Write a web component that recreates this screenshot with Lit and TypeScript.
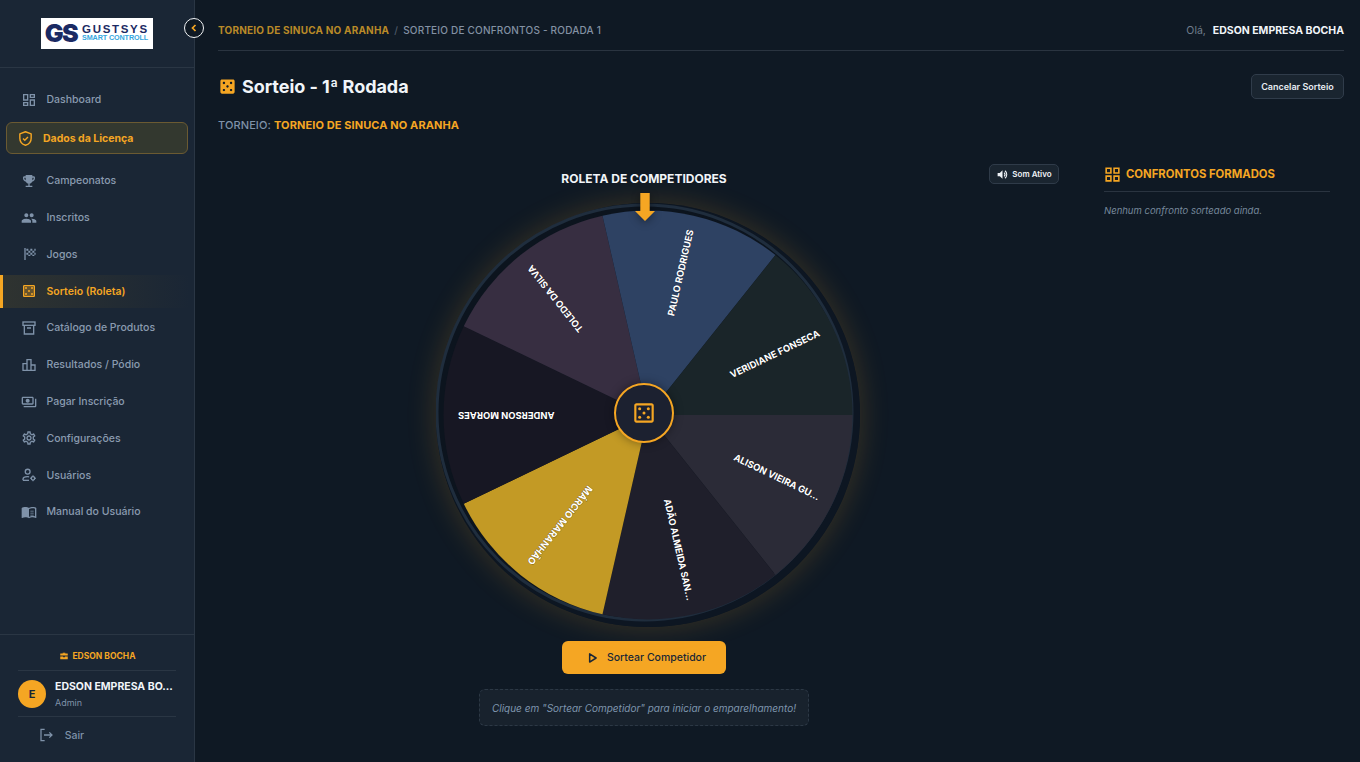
import { LitElement, html, css, svg } from "lit";
import { customElement } from "lit/decorators.js";

const P: Record<string, string> = {
  dashboard: "M19 5v2h-4V5h4M9 5v6H5V5h4m10 8v6h-4v-6h4M9 17v2H5v-2h4M21 3h-8v6h8V3zM11 3H3v10h8V3zm10 8h-8v10h8V11zM11 15H3v6h8v-6z",
  trophy: "M19 5h-2V3H7v2H5c-1.1 0-2 .9-2 2v1c0 2.55 1.92 4.63 4.39 4.94.63 1.5 1.98 2.63 3.61 2.96V19H7v2h10v-2h-4v-3.1c1.63-.33 2.98-1.46 3.61-2.96C19.08 12.63 21 10.55 21 8V7c0-1.1-.9-2-2-2zM5 8V7h2v3.82C5.84 10.4 5 9.3 5 8zm14 0c0 1.3-.84 2.4-2 2.82V7h2v1z",
  group: "M16 11c1.66 0 2.99-1.34 2.99-3S17.66 5 16 5c-1.66 0-3 1.34-3 3s1.34 3 3 3zm-8 0c1.66 0 2.99-1.34 2.99-3S9.66 5 8 5C6.34 5 5 6.34 5 8s1.34 3 3 3zm0 2c-2.33 0-7 1.17-7 3.5V19h14v-2.5c0-2.33-4.67-3.5-7-3.5zm8 0c-.29 0-.62.02-.97.05 1.16.84 1.97 1.97 1.97 3.45V19h6v-2.5c0-2.33-4.67-3.5-7-3.5z",
  flag: "M5 3h2v18H5zM8 4h3v3H8zM14 4h3v3h-3zM20 4h2v3h-2zM11 7h3v3h-3zM17 7h3v3h-3zM8 10h3v3H8zM14 10h3v3h-3zM20 10h2v3h-2zM11 13h3v2h-3zM17 13h3v2h-3z",
  diceBox: "M19 5v14H5V5h14m0-2H5c-1.1 0-2 .9-2 2v14c0 1.1.9 2 2 2h14c1.1 0 2-.9 2-2V5c0-1.1-.9-2-2-2z",
  diceFull: "M19 3H5c-1.1 0-2 .9-2 2v14c0 1.1.9 2 2 2h14c1.1 0 2-.9 2-2V5c0-1.1-.9-2-2-2zM7.5 18c-.83 0-1.5-.67-1.5-1.5S6.67 15 7.5 15s1.5.67 1.5 1.5S8.33 18 7.5 18zm0-9C6.67 9 6 8.33 6 7.5S6.67 6 7.5 6 9 6.67 9 7.5 8.33 9 7.5 9zm4.5 4.5c-.83 0-1.5-.67-1.5-1.5s.67-1.5 1.5-1.5 1.5.67 1.5 1.5-.67 1.5-1.5 1.5zm4.5 4.5c-.83 0-1.5-.67-1.5-1.5s.67-1.5 1.5-1.5 1.5.67 1.5 1.5-.67 1.5-1.5 1.5zm0-9c-.83 0-1.5-.67-1.5-1.5S15.67 6 16.5 6s1.5.67 1.5 1.5S17.33 9 16.5 9z",
  chart: "M16 11V3H8v6H2v12h20V11h-6zm-6-6h4v14h-4V5zm-6 6h4v8H4v-8zm16 8h-4v-6h4v6z",
  pay: "M19 14V6c0-1.1-.9-2-2-2H3c-1.1 0-2 .9-2 2v8c0 1.1.9 2 2 2h14c1.1 0 2-.9 2-2zm-2 0H3V6h14v8zm-7-7c-1.66 0-3 1.34-3 3s1.34 3 3 3 3-1.34 3-3-1.34-3-3-3zm13 0v11c0 1.1-.9 2-2 2H4v-2h17V7h2z",
  gear: "M19.43 12.98c.04-.32.07-.64.07-.98 0-.34-.03-.66-.07-.98l2.11-1.65c.19-.15.24-.42.12-.64l-2-3.46c-.09-.16-.26-.25-.44-.25-.06 0-.12.01-.17.03l-2.49 1c-.52-.4-1.08-.73-1.69-.98l-.38-2.65C14.46 2.18 14.25 2 14 2h-4c-.25 0-.46.18-.49.42l-.38 2.65c-.61.25-1.17.59-1.69.98l-2.49-1c-.06-.02-.12-.03-.18-.03-.17 0-.34.09-.43.25l-2 3.46c-.13.22-.07.49.12.64l2.11 1.65c-.04.32-.07.65-.07.98 0 .33.03.66.07.98l-2.11 1.65c-.19.15-.24.42-.12.64l2 3.46c.09.16.26.25.44.25.06 0 .12-.01.17-.03l2.49-1c.52.4 1.08.73 1.69.98l.38 2.65c.03.24.24.42.49.42h4c.25 0 .46-.18.49-.42l.38-2.65c.61-.25 1.17-.59 1.69-.98l2.49 1c.06.02.12.03.18.03.17 0 .34-.09.43-.25l2-3.46c.12-.22.07-.49-.12-.64l-2.11-1.65zm-1.98-1.71c.04.31.05.52.05.73 0 .21-.02.43-.05.73l-.14 1.13.89.7 1.08.84-.7 1.21-1.27-.51-1.04-.42-.9.68c-.43.32-.84.56-1.25.73l-1.06.43-.16 1.13-.2 1.35h-1.4l-.19-1.35-.16-1.13-1.06-.43c-.43-.18-.83-.41-1.23-.71l-.91-.7-1.06.43-1.27.51-.7-1.21 1.08-.84.89-.7-.14-1.13c-.03-.31-.05-.54-.05-.74s.02-.43.05-.73l.14-1.13-.89-.7-1.08-.84.7-1.21 1.27.51 1.04.42.9-.68c.43-.32.84-.56 1.25-.73l1.06-.43.16-1.13.2-1.35h1.39l.19 1.35.16 1.13 1.06.43c.43.18.83.41 1.23.71l.91.7 1.06-.43 1.27-.51.7 1.21-1.07.85-.89.7.14 1.13zM12 8c-2.21 0-4 1.79-4 4s1.79 4 4 4 4-1.79 4-4-1.79-4-4-4zm0 6c-1.1 0-2-.9-2-2s.9-2 2-2 2 .9 2 2-.9 2-2 2z",
  book: "M21 5c-1.11-.35-2.33-.5-3.5-.5-1.95 0-4.05.4-5.5 1.5-1.45-1.1-3.55-1.5-5.5-1.5S2.45 4.9 1 6v14.65c0 .25.25.5.5.5.1 0 .15-.05.25-.05C3.1 20.45 5.05 20 6.5 20c1.95 0 4.05.4 5.5 1.5 1.35-.85 3.8-1.5 5.5-1.5 1.65 0 3.35.3 4.75 1.05.1.05.15.05.25.05.25 0 .5-.25.5-.5V6c-.6-.45-1.25-.75-2-1zm0 13.5c-1.1-.35-2.3-.5-3.5-.5-1.7 0-4.15.65-5.5 1.5V8c1.35-.85 3.8-1.5 5.5-1.5 1.2 0 2.4.15 3.5.5v11.5zM14 10h5v1.4h-5zM14 13h5v1.4h-5zM14 16h5v1.4h-5z",
  grid: "M3 3v8h8V3H3zm6 6H5V5h4v4zm-6 4v8h8v-8H3zm6 6H5v-4h4v4zm4-16v8h8V3h-8zm6 6h-4V5h4v4zm-6 4v8h8v-8h-8zm6 6h-4v-4h4v4z",
  brief: "M9 6V4h6v2h5c.6 0 1 .4 1 1v4H3V7c0-.6.4-1 1-1zm2 0h2V5.5h-2zM3 13h7v2h4v-2h7v6c0 .6-.4 1-1 1H4c-.6 0-1-.4-1-1z",
};

const icons: Record<string, unknown> = {
  shield: svg`<path d="M12 2.5 20 5.5v6c0 5-3.4 8.6-8 10-4.6-1.4-8-5-8-10v-6z" fill="none" stroke="currentColor" stroke-width="2" stroke-linejoin="round"/><path d="m8.5 12 2.5 2.5 4.5-4.5" fill="none" stroke="currentColor" stroke-width="2"/>`,
  box: svg`<g fill="none" stroke="currentColor" stroke-width="2"><rect x="3" y="3" width="18" height="5"/><path d="M5 8v13h14V8M9 12h6"/></g>`,
  casino: svg`<path d=${P.diceBox} fill="currentColor"/><rect x="5" y="5" width="14" height="14" fill="currentColor" opacity=".3"/><g fill="currentColor"><circle cx="7.5" cy="7.5" r="1.5"/><circle cx="16.5" cy="7.5" r="1.5"/><circle cx="12" cy="12" r="1.5"/><circle cx="7.5" cy="16.5" r="1.5"/><circle cx="16.5" cy="16.5" r="1.5"/></g>`,
  users: svg`<g fill="none" stroke="currentColor" stroke-width="2"><circle cx="10" cy="7" r="3.6"/><path d="M3 20v-1.5c0-2.6 3.2-4 7-4 .8 0 1.5.1 2.2.2"/><path d="M3 20h9"/><circle cx="18" cy="17" r="2.6"/></g><g stroke="currentColor" stroke-width="1.6"><path d="M18 12.5v2M18 19.5v2M13.5 17h2M20.5 17h2"/></g>`,
  logout: svg`<g fill="none" stroke="currentColor" stroke-width="1.9"><path d="M10 3.5H4.5v17H10M9 12h12M17 8l4 4-4 4"/></g>`,
  sound: svg`<path d="M3 9v6h4l5 5V4L7 9z" fill="currentColor"/><path d="M15 8.5a5 5 0 0 1 0 7M16.5 5a9 9 0 0 1 0 14" fill="none" stroke="currentColor" stroke-width="2"/>`,
  play: svg`<path d="M8 5v14l11-7z" fill="none" stroke="currentColor" stroke-width="2.6" stroke-linejoin="round"/>`,
  chevron: svg`<path d="M15 6l-6 6 6 6" fill="none" stroke="currentColor" stroke-width="3.4"/>`,
  dieHub: svg`<path d=${P.diceBox} fill="currentColor"/><g fill="currentColor"><circle cx="8" cy="8" r="1.4"/><circle cx="16" cy="8" r="1.4"/><circle cx="12" cy="12" r="1.4"/><circle cx="8" cy="16" r="1.4"/><circle cx="16" cy="16" r="1.4"/></g>`,
};

function icon(name: string, cls = "") {
  const body = icons[name] ?? svg`<path d=${P[name]} fill="currentColor"/>`;
  return html`<svg class="ic ${cls}" viewBox="0 0 24 24" aria-hidden="true">${body}</svg>`;
}

const NAV = [
  { i: "dashboard", t: "Dashboard" },
  { i: "shield", t: "Dados da Licença", kind: "license" },
  { i: "trophy", t: "Campeonatos" },
  { i: "group", t: "Inscritos" },
  { i: "flag", t: "Jogos" },
  { i: "casino", t: "Sorteio (Roleta)", kind: "active" },
  { i: "box", t: "Catálogo de Produtos" },
  { i: "chart", t: "Resultados / Pódio" },
  { i: "pay", t: "Pagar Inscrição" },
  { i: "gear", t: "Configurações" },
  { i: "users", t: "Usuários" },
  { i: "book", t: "Manual do Usuário" },
];

const SEGMENTS = [
  { n: "ALISON VIEIRA GU...", c: "#2b2b37" },
  { n: "ADÃO ALMEIDA SAN...", c: "#1f1f2b" },
  { n: "MÁRCIO MARANHÃO", c: "#c39a25" },
  { n: "ANDERSON MORAES", c: "#171723" },
  { n: "TOLEDO DA SILVA", c: "#372e41" },
  { n: "PAULO RODRIGUES", c: "#2e4263" },
  { n: "VERIDIANE FONSECA", c: "#1a2529" },
];

function wheel() {
  const r = 204.5;
  const step = (Math.PI * 2) / SEGMENTS.length;
  return svg`
    <circle cx="212" cy="212" r="212" fill="#0d1622"/>
    <circle cx="208.5" cy="209.5" r="207.5" fill="#0c141e" stroke="#1f2d3d" stroke-width="3"/>
    ${SEGMENTS.map((s, k) => {
      const a = k * step;
      const b = a + step;
      const d = `M212 212L${212 + r * Math.cos(a)} ${212 + r * Math.sin(a)}A${r} ${r} 0 0 1 ${212 + r * Math.cos(b)} ${212 + r * Math.sin(b)}Z`;
      const deg = ((k + 0.5) * 360) / SEGMENTS.length;
      return svg`<path d=${d} fill=${s.c}/>
        <text class="seg" transform="translate(212 212) rotate(${deg})" x="190" y="3.4" text-anchor="end">${s.n}</text>`;
    })}
  `;
}

@customElement("app-root")
export class AppRoot extends LitElement {
  static styles = css`
    :host {
      display: flex;
      width: 1360px;
      height: 762px;
      overflow: hidden;
      background: #0f1924;
      font-family: Inter, "Noto Sans", sans-serif;
      color: #f1f5f9;
      position: relative;
    }
    .ic { width: 16px; height: 16px; flex: none; display: block; }
    .side {
      width: 195px;
      flex: none;
      box-sizing: border-box;
      background: #1a2635;
      border-right: 1px solid #2a3644;
      display: flex;
      flex-direction: column;
    }
    .brand {
      height: 68px;
      box-sizing: border-box;
      border-bottom: 1px solid #2a3644;
      padding: 18px 0 0 41px;
      flex: none;
    }
    .logo {
      width: 112px;
      height: 31px;
      background: #fff;
      display: flex;
      align-items: center;
      gap: 3px;
      box-sizing: border-box;
      padding: 0 2px;
    }
    .gs {
      font: 900 25px/1 Inter, sans-serif;
      letter-spacing: -1.5px;
      color: #1b2a63;
      width: 36px;
      flex: none;
      text-align: center;
    }
    .lt { display: flex; flex-direction: column; font-family: "Liberation Sans", sans-serif; }
    .lt b { font-size: 11.5px; line-height: 9px; font-weight: 900; color: #1b2a63; letter-spacing: 1.7px; }
    .lt i { font-size: 7.2px; line-height: 8px; font-weight: 700; font-style: normal; color: #35a7e0; letter-spacing: -.1px; }
    .collapse {
      position: absolute;
      left: 184px;
      top: 18px;
      width: 20px;
      height: 20px;
      box-sizing: border-box;
      border: 1px solid #f2f4f6;
      border-radius: 50%;
      background: #0f1924;
      color: #f5a623;
      display: flex;
      align-items: center;
      justify-content: center;
    }
    .collapse .ic { width: 12px; height: 12px; }
    nav { padding-top: 15.6px; flex: 1; display: flex; flex-direction: column; }
    .item {
      height: 32.8px;
      margin-bottom: 4px;
      display: flex;
      align-items: center;
      gap: 10px;
      padding-left: 20.5px;
      font-size: 10.5px;
      font-weight: 500;
      color: #8a9bb0;
      box-sizing: border-box;
    }
    .item .ic { color: #7f92a9; }
    .item.license {
      margin: 2px 6px 10px;
      width: 182px;
      height: 32px;
      padding-left: 10px;
      gap: 9px;
      border: 1px solid #6b5a32;
      border-radius: 6px;
      background: #33382f;
      color: #f5a623;
      font-weight: 700;
    }
    .item.license .ic { color: #f5a623; width: 17px; height: 17px; }
    .item.active {
      border-left: 3px solid #f5a623;
      padding-left: 17.5px;
      width: 190px;
      background: linear-gradient(90deg, #2f3330, #1a2635);
      color: #f5a623;
      font-weight: 600;
    }
    .item.active .ic { color: #f5a623; }
    .foot {
      border-top: 1px solid #2a3644;
      height: 128px;
      box-sizing: border-box;
      padding: 0 18px;
      flex: none;
      display: flex;
      flex-direction: column;
    }
    .org {
      height: 36px;
      box-sizing: border-box;
      padding: 7px 0 0 1px;
      border-bottom: 1px solid #2a3644;
      display: flex;
      align-items: center;
      justify-content: center;
      gap: 3px;
      color: #f5a623;
      font-size: 8.5px;
      font-weight: 700;
      flex: none;
    }
    .org .ic { width: 10px; height: 10px; }
    .user {
      height: 46px;
      box-sizing: border-box;
      border-bottom: 1px solid #2a3644;
      display: flex;
      align-items: center;
      gap: 9px;
      flex: none;
    }
    .avatar {
      width: 28px;
      height: 28px;
      border-radius: 50%;
      background: #f5a623;
      color: #1a2635;
      font-size: 11px;
      font-weight: 700;
      display: flex;
      align-items: center;
      justify-content: center;
      flex: none;
    }
    .uname { font-size: 10.5px; font-weight: 700; color: #f1f5f9; line-height: 13px; white-space: nowrap; }
    .urole { font-size: 9px; color: #7f92a9; line-height: 11px; margin-top: 4px; }
    .logout {
      display: flex;
      align-items: center;
      gap: 11px;
      padding: 10px 0 0 19.7px;
      font-size: 10.5px;
      font-weight: 500;
      color: #7f92a9;
    }
    .main {
      flex: 1;
      min-width: 0;
      padding: 0 16px 0 23px;
      display: flex;
      flex-direction: column;
    }
    .top {
      height: 51px;
      flex: none;
      box-sizing: border-box;
      border-bottom: 1px solid #2a3440;
      padding-top: 10px;
      display: flex;
      align-items: center;
      justify-content: space-between;
      font-size: 10px;
    }
    .crumb { display: flex; gap: 5px; font-weight: 500; color: #8391a3; letter-spacing: .2px; }
    .crumb b { color: #b98a28; font-weight: 700; letter-spacing: .2px; }
    .crumb span { color: #4d5a69; }
    .hello { color: #707d8c; font-size: 10.5px; }
    .hello b { color: #f1f5f9; font-weight: 700; margin-left: 4px; }
    .head {
      display: flex;
      justify-content: space-between;
      align-items: center;
      height: 25px;
      margin-top: 23px;
      flex: none;
    }
    h1 { margin: 0; display: flex; align-items: center; gap: 5px; font-size: 18px; font-weight: 700; color: #f1f5f9; line-height: 25px; letter-spacing: -.05px; }
    h1 .ic { width: 19px; height: 19px; color: #f5a623; }
    .cancel {
      width: 93px;
      height: 25px;
      box-sizing: border-box;
      border: 1px solid #303c4a;
      border-radius: 5px;
      background: #1a2530;
      color: #e6ebf1;
      font-size: 9px;
      font-weight: 600;
      display: flex;
      align-items: center;
      justify-content: center;
    }
    .tourn { margin-top: 20px; font-size: 11px; line-height: 13px; font-weight: 500; color: #7f92a9; flex: none; letter-spacing: .1px; }
    .tourn b { color: #f5a623; font-weight: 700; }
    .body { display: flex; flex: 1; min-height: 0; margin-top: 32px; }
    .stage {
      width: 852px;
      flex: none;
      display: flex;
      flex-direction: column;
      align-items: center;
      position: relative;
    }
    .sound {
      position: absolute;
      right: 11px;
      top: 0;
      width: 70px;
      height: 20px;
      box-sizing: border-box;
      border: 1px solid #2f3b49;
      border-radius: 5px;
      background: #1a2530;
      font-size: 8px;
      font-weight: 600;
      color: #eef2f6;
      display: flex;
      align-items: center;
      justify-content: center;
      gap: 3px;
    }
    .sound .ic { width: 13px; height: 13px; }
    .st-title {
      font-size: 12px;
      font-weight: 700;
      color: #f1f5f9;
      line-height: 15px;
      margin-top: 7px;
    }
    .wheel {
      width: 424px;
      height: 424px;
      margin: 17px 0 0 7px;
      position: relative;
      flex: none;
      border-radius: 50%;
      box-shadow: 0 0 30px rgba(245, 166, 35, .2);
    }
    .disc { display: block; width: 424px; height: 424px; }
    .seg {
      font: 700 9.4px Inter, sans-serif;
      fill: #fff;
      paint-order: stroke;
      stroke: rgba(0, 0, 0, .3);
      stroke-width: 1px;
    }
    .arrow {
      position: absolute;
      left: 199px;
      top: -10.2px;
      width: 20px;
      height: 28px;
      display: block;
      filter: drop-shadow(0 2px 4px rgba(0, 0, 0, .4));
    }
    .hub {
      position: absolute;
      left: 178.5px;
      top: 179.5px;
      width: 60px;
      height: 60px;
      box-sizing: border-box;
      border: 2px solid #f5a623;
      border-radius: 50%;
      background: #1c2130;
      color: #f5a623;
      display: flex;
      align-items: center;
      justify-content: center;
      box-shadow: 0 0 10px rgba(0, 0, 0, .4);
    }
    .hub .ic { width: 26px; height: 26px; }
    .go {
      margin-top: 14px;
      width: 164px;
      height: 33px;
      border-radius: 6px;
      background: #f5a623;
      color: #1a2635;
      font-size: 10.5px;
      font-weight: 500;
      display: flex;
      align-items: center;
      justify-content: center;
      gap: 8px;
      flex: none;
    }
    .go .ic { width: 14px; height: 14px; margin-left: 3px; }
    .hint {
      margin-top: 15px;
      width: 330px;
      height: 37px;
      box-sizing: border-box;
      border: 1px dashed #2c3845;
      border-radius: 6px;
      background: #18222d;
      font-size: 10px;
      font-style: italic;
      color: #7f96ad;
      display: flex;
      align-items: center;
      justify-content: center;
      flex: none;
    }
    aside { margin-left: 34px; width: 226px; flex: none; }
    .af { height: 28px; border-bottom: 1px solid #2a3440; display: flex; align-items: flex-start; gap: 3.7px; padding-top: 2px; box-sizing: border-box; color: #f5a623; font-size: 11.3px; font-weight: 700; line-height: 16px; }
    .af .ic { width: 19px; height: 19px; margin: -1px 0 0 -.7px; }
    .none { margin-top: 12px; font-size: 9.5px; line-height: 13px; font-style: italic; color: #77899c; }
  `;

  render() {
    return html`
      <div class="side">
        <div class="brand">
          <div class="logo">
            <div class="gs">GS</div>
            <div class="lt"><b>GUSTSYS</b><i>SMART CONTROLL</i></div>
          </div>
        </div>
        <nav>
          ${NAV.map((n) => html`<div class="item ${n.kind ?? ""}">${icon(n.i)}<span>${n.t}</span></div>`)}
        </nav>
        <div class="foot">
          <div class="org">${icon("brief")}<span>EDSON BOCHA</span></div>
          <div class="user">
            <div class="avatar">E</div>
            <div>
              <div class="uname">EDSON EMPRESA BO...</div>
              <div class="urole">Admin</div>
            </div>
          </div>
          <div class="logout">${icon("logout")}<span>Sair</span></div>
        </div>
      </div>
      <div class="collapse">${icon("chevron")}</div>
      <div class="main">
        <div class="top">
          <div class="crumb"><b>TORNEIO DE SINUCA NO ARANHA</b><span>/</span>SORTEIO DE CONFRONTOS - RODADA 1</div>
          <div class="hello">Olá, <b>EDSON EMPRESA BOCHA</b></div>
        </div>
        <div class="head">
          <h1>${icon("diceFull")}<span>Sorteio - 1ª Rodada</span></h1>
          <div class="cancel">Cancelar Sorteio</div>
        </div>
        <div class="tourn">TORNEIO: <b>TORNEIO DE SINUCA NO ARANHA</b></div>
        <div class="body">
          <div class="stage">
            <div class="sound">${icon("sound")}<span>Som Ativo</span></div>
            <div class="st-title">ROLETA DE COMPETIDORES</div>
            <div class="wheel">
              <svg class="disc" viewBox="0 0 424 424">${wheel()}</svg>
              <svg class="arrow" viewBox="0 0 20 28"><path d="M5.3 0h9.4v18H20L10 28 0 18h5.3z" fill="#f5a623"/></svg>
              <div class="hub">${icon("dieHub")}</div>
            </div>
            <div class="go">${icon("play")}<span>Sortear Competidor</span></div>
            <div class="hint">Clique em "Sortear Competidor" para iniciar o emparelhamento!</div>
          </div>
          <aside>
            <div class="af">${icon("grid")}<span>CONFRONTOS FORMADOS</span></div>
            <div class="none">Nenhum confronto sorteado ainda.</div>
          </aside>
        </div>
      </div>
    `;
  }
}
